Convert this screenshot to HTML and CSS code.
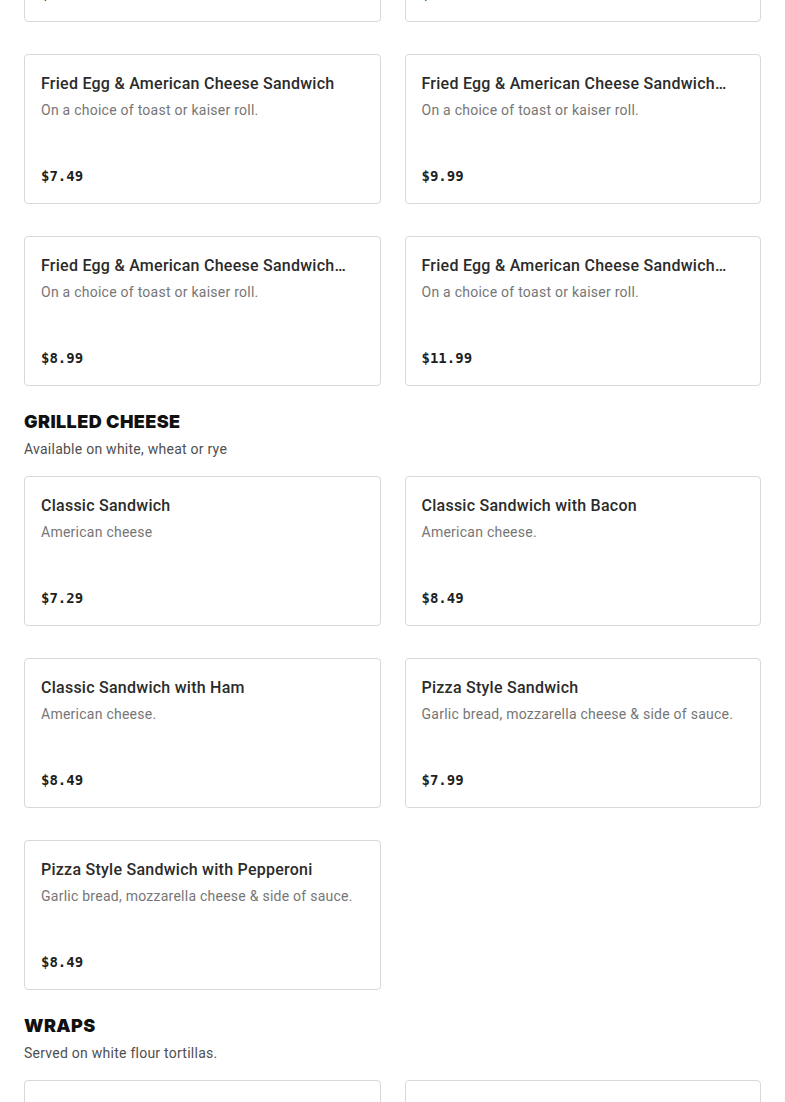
FILE: index.html
```html
<!DOCTYPE html>
<html lang="en">
<head>
<meta charset="utf-8">
<title>Menu</title>
<link rel="stylesheet" href="styles.css">
</head>
<body>
<main class="menu">
  <section class="section section-first">
    <div class="grid">
      <div class="card"><div class="title">Fried Egg Sandwich</div><div class="desc">On a choice of toast or kaiser roll.</div><div class="price">$5.99</div></div>
      <div class="card"><div class="title">Fried Egg Sandwich with Bacon</div><div class="desc">On a choice of toast or kaiser roll.</div><div class="price">$7.99</div></div>
      <div class="card"><div class="title">Fried Egg &amp; American Cheese Sandwich</div><div class="desc">On a choice of toast or kaiser roll.</div><div class="price">$7.49</div></div>
      <div class="card"><div class="title">Fried Egg &amp; American Cheese Sandwich with Bacon</div><div class="desc">On a choice of toast or kaiser roll.</div><div class="price">$9.99</div></div>
      <div class="card"><div class="title">Fried Egg &amp; American Cheese Sandwich with Ham</div><div class="desc">On a choice of toast or kaiser roll.</div><div class="price">$8.99</div></div>
      <div class="card"><div class="title">Fried Egg &amp; American Cheese Sandwich with Sausage</div><div class="desc">On a choice of toast or kaiser roll.</div><div class="price">$11.99</div></div>
    </div>
  </section>

  <section class="section">
    <h2 class="heading">GRILLED CHEESE</h2>
    <p class="subtitle">Available on white, wheat or rye</p>
    <div class="grid">
      <div class="card"><div class="title">Classic Sandwich</div><div class="desc">American cheese</div><div class="price">$7.29</div></div>
      <div class="card"><div class="title">Classic Sandwich with Bacon</div><div class="desc">American cheese.</div><div class="price">$8.49</div></div>
      <div class="card"><div class="title">Classic Sandwich with Ham</div><div class="desc">American cheese.</div><div class="price">$8.49</div></div>
      <div class="card"><div class="title">Pizza Style Sandwich</div><div class="desc">Garlic bread, mozzarella cheese &amp; side of sauce.</div><div class="price">$7.99</div></div>
      <div class="card"><div class="title">Pizza Style Sandwich with Pepperoni</div><div class="desc">Garlic bread, mozzarella cheese &amp; side of sauce.</div><div class="price">$8.49</div></div>
    </div>
  </section>

  <section class="section">
    <h2 class="heading">WRAPS</h2>
    <p class="subtitle">Served on white flour tortillas.</p>
    <div class="grid">
      <div class="card card-pending"><div class="title">Tuna Wrap</div><div class="desc">Tuna salad, lettuce &amp; tomato.</div><div class="price">$8.99</div></div>
      <div class="card card-pending"><div class="title">Grilled Chicken Caesar Wrap</div><div class="desc">Romaine lettuce, parmesan &amp; caesar dressing.</div><div class="price">$9.99</div></div>
    </div>
  </section>
</main>
</body>
</html>
```

FILE: styles.css
```css
* { box-sizing: border-box; }
html, body { margin: 0; padding: 0; background: #ffffff; }
body {
  font-family: Roboto, Inter, "Liberation Sans", sans-serif;
  color: #2a2a2a;
}
.menu {
  padding: 0 24px 40px;
}
.section-first {
  margin-top: -128px;
}
.section + .section {
  margin-top: 24px;
}
.heading {
  margin: 0;
  font-family: Inter, "Liberation Sans", sans-serif;
  font-size: 18px;
  line-height: 24px;
  font-weight: 900;
  letter-spacing: 0.4px;
  color: #111111;
}
.subtitle {
  margin: 4px 0 16px;
  font-size: 14px;
  line-height: 22px;
  letter-spacing: 0.25px;
  color: #4f4f4f;
}
.grid {
  display: grid;
  grid-template-columns: 1fr 1fr;
  column-gap: 24px;
  row-gap: 32px;
}
.card {
  height: 150px;
  border: 1px solid #d8d8d8;
  border-radius: 4px;
  padding: 17px 16px 15px;
  display: flex;
  flex-direction: column;
  min-width: 0;
}
.title {
  font-size: 16px;
  line-height: 24px;
  font-weight: 500;
  letter-spacing: 0.25px;
  color: #2b2b2b;
  display: -webkit-box;
  -webkit-box-orient: vertical;
  -webkit-line-clamp: 1;
  overflow: hidden;
  flex: none;
  height: 24px;
}
.desc {
  margin-top: 4px;
  font-size: 14px;
  line-height: 20px;
  letter-spacing: 0.25px;
  color: #767676;
}
.price {
  margin-top: auto;
  font-family: "DejaVu Sans Mono", "Liberation Mono", monospace;
  font-weight: 700;
  font-size: 14px;
  line-height: 24px;
  color: #1e1e1e;
}
.card-pending .title,
.card-pending .desc,
.card-pending .price {
  color: #ececec;
}
```
